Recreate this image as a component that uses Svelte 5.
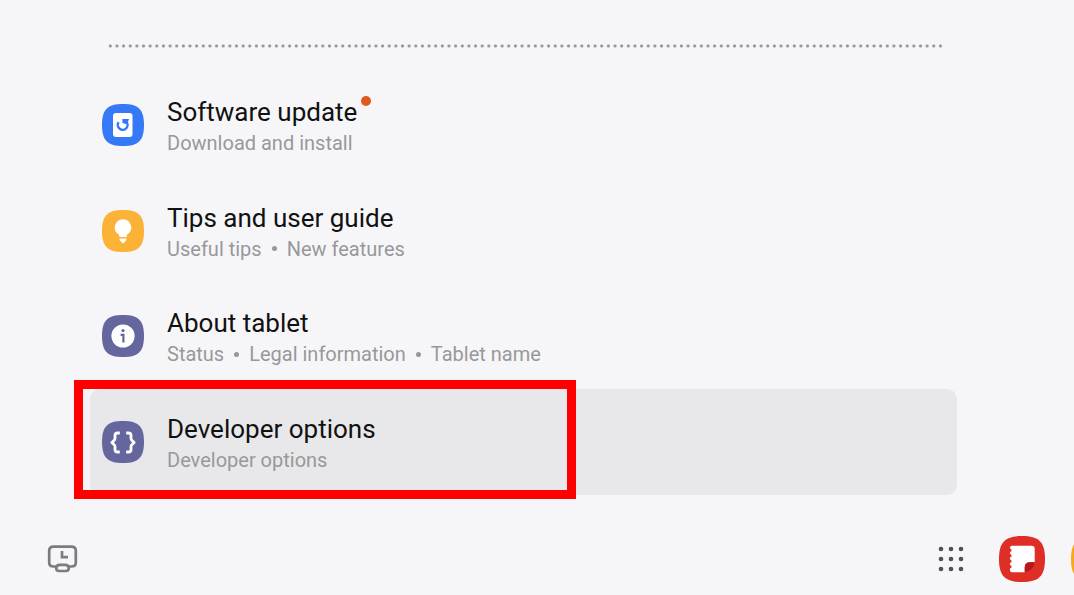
<script>
  const items = [
    { id: 'update', title: 'Software update', details: ['Download and install'], color: '#3579f6', badge: true },
    { id: 'tips', title: 'Tips and user guide', details: ['Useful tips', 'New features'], color: '#fcb236' },
    { id: 'about', title: 'About tablet', details: ['Status', 'Legal information', 'Tablet name'], color: '#66669f' },
    { id: 'developer', title: 'Developer options', details: ['Developer options'], color: '#66669f', selected: true },
  ];
  const squircle = 'M21 0C36.500 0 42 5.500 42 21S36.500 42 21 42 0 36.500 0 21 5.500 0 21 0Z';
  const dots = [3, 13, 23];
</script>

<div class="page">
  <main>
    <div class="divider"></div>
    <nav class="list" aria-label="Settings">
      {#each items as item (item.id)}
        <div class="row" class:selected={item.selected}>
          <a class="entry" href={'#' + item.id} aria-current={item.selected ? 'page' : undefined}>
            <svg class="icon" viewBox="0 0 42 42" aria-hidden="true">
              <path d={squircle} fill={item.color} />
              {#if item.id === 'update'}
                <rect x="11" y="9" width="19.500" height="24" rx="3" fill="#fff" />
                <path d="M16.600 18.200A4.900 4.900 0 1 0 24.200 17.500" fill="none" stroke={item.color} stroke-width="2.400" />
                <path d="M20.400 18.900V14.900H27L25.200 20.500Z" fill={item.color} />
              {:else if item.id === 'tips'}
                <path d="M21 9.200A8.400 8.400 0 0 0 12.600 17.600C12.600 21 14.500 23.200 16.800 24.600L17.600 27H24.400L25.200 24.600C27.500 23.200 29.400 21 29.400 17.600A8.400 8.400 0 0 0 21 9.200Z" fill="#fff" />
                <path d="M17.600 28.400H24.400V29.600Q24.400 31 22.800 31.400L22 33H20L19.200 31.400Q17.600 31 17.600 29.600Z" fill="#fff" />
              {:else if item.id === 'about'}
                <circle cx="21" cy="21" r="11.600" fill="#fff" />
                <circle cx="21" cy="15.600" r="1.600" fill={item.color} />
                <path d="M18.600 19.800H21.400V27.500" fill="none" stroke={item.color} stroke-width="2.200" />
              {:else}
                <path d="M17.800 12H15.600Q13 12 13 14.600V17.200Q13 18.600 12 19.500L9.800 21.500 12 23.500Q13 24.400 13 25.800V28.400Q13 31 15.600 31H17.800M24.200 12H26.400Q29 12 29 14.600V17.200Q29 18.600 30 19.500L32.200 21.500 30 23.500Q29 24.400 29 25.800V28.400Q29 31 26.400 31H24.200" fill="none" stroke="#fff" stroke-width="2.800" stroke-linejoin="round" />
              {/if}
            </svg>
            <span class="text">
              <span class="title">{item.title}{#if item.badge}<i class="badge"></i>{/if}</span>
              <span class="details">
                {#each item.details as detail}<span class="detail">{detail}</span>{/each}
              </span>
            </span>
          </a>
          {#if item.selected}<div class="highlight"></div>{/if}
        </div>
      {/each}
    </nav>
  </main>

  <footer>
    <button class="recent" aria-label="Recent">
      <svg width="31" height="28" viewBox="0 0 31 28" fill="none" stroke="#7c7c7e" stroke-width="2.700" aria-hidden="true">
        <path d="M9 21.500H6.500Q2.200 21.500 2.200 17.500V5.800Q2.200 1.600 6.500 1.600H24.500Q28.800 1.600 28.800 5.800V17.500Q28.800 21.500 24.500 21.500H22" />
        <path d="M13 19.800H18Q21.800 19.800 21.800 23.100 21.800 26 19 26H12Q9.200 26 9.200 23.100 9.200 19.800 13 19.800Z" />
        <path d="M15 6V12.200H21" />
      </svg>
    </button>
    <div class="apps">
      <button aria-label="All apps">
        <svg width="26" height="26" viewBox="0 0 26 26" fill="#505053" aria-hidden="true">
          {#each dots as y}{#each dots as x}<circle cx={x} cy={y} r="2.300" />{/each}{/each}
        </svg>
      </button>
      <button aria-label="Notes">
        <svg width="46" height="46" viewBox="0 0 42 42" aria-hidden="true">
          <path d={squircle} fill="#df2e25" />
          <path d="M12 9H29.800Q32.600 9 32.600 11.800V24H28.500Q23.500 24 23.500 29V33H12Q10 33 10 31V29.500A1.500 1.500 0 0 0 10 26.500V24.500A1.500 1.500 0 0 0 10 21.500V19.500A1.500 1.500 0 0 0 10 16.500V14.500A1.500 1.500 0 0 0 10 11.500Q10 9 12 9Z" fill="#fff" />
          <path d="M32.600 24Q31.500 32 23.500 33V29Q23.500 24 28.500 24Z" fill="#b5171c" />
        </svg>
      </button>
      <button aria-label="Files">
        <svg width="46" height="46" viewBox="0 0 42 42" aria-hidden="true">
          <path d={squircle} fill="#f5a81c" />
        </svg>
      </button>
    </div>
  </footer>
</div>

<style>
  :global(body) {
    background: #f6f6f9;
  }
  .page {
    min-height: 100vh;
    display: flex;
    flex-direction: column;
    overflow: hidden;
    font-family: Roboto, "Liberation Sans", sans-serif;
    color: #111;
  }
  main {
    padding: 44px 117px 0 90px;
  }
  .divider {
    height: 4px;
    margin: 0 13px 24px 17px;
    background: radial-gradient(circle, #949497 1px, transparent 2px) 0 0 / calc(100% / 126) 4px;
  }
  .list {
    display: grid;
    grid-auto-rows: 1fr;
    min-height: 423px;
  }
  .row {
    position: relative;
    display: flex;
    border-radius: 10px;
  }
  .selected {
    background: #e8e8ea;
  }
  .entry {
    flex: 1;
    display: flex;
    align-items: center;
    gap: 23px;
    padding: 0 12px;
    color: inherit;
    text-decoration: none;
  }
  .icon {
    width: 42px;
    height: 42px;
    flex: none;
  }
  .text {
    display: flex;
    flex-direction: column;
    align-items: flex-start;
  }
  .title {
    position: relative;
    font-size: 26px;
    line-height: 36px;
  }
  .badge {
    position: absolute;
    top: 2px;
    left: calc(100% + 4px);
    width: 10px;
    height: 10px;
    border-radius: 50%;
    background: #e05a1e;
  }
  .details {
    display: flex;
    font-size: 20px;
    line-height: 26px;
    color: #98989b;
  }
  .detail {
    display: flex;
    align-items: center;
  }
  .detail + .detail::before {
    content: "";
    width: 5px;
    height: 5px;
    margin: 0 10px;
    border-radius: 50%;
    background: currentColor;
  }
  .highlight {
    position: absolute;
    top: -9px;
    bottom: -4px;
    left: -16px;
    width: 484px;
    border: 9px solid #f00;
    pointer-events: none;
  }
  footer {
    margin-top: auto;
    height: 72px;
    display: flex;
    align-items: center;
    justify-content: space-between;
    padding-left: 47px;
  }
  button {
    display: flex;
    padding: 0;
    border: 0;
    background: none;
  }
  .apps {
    display: flex;
    align-items: center;
    gap: 26px;
    margin-right: -43px;
  }
  .apps button:first-child {
    margin-right: 9px;
  }
</style>
